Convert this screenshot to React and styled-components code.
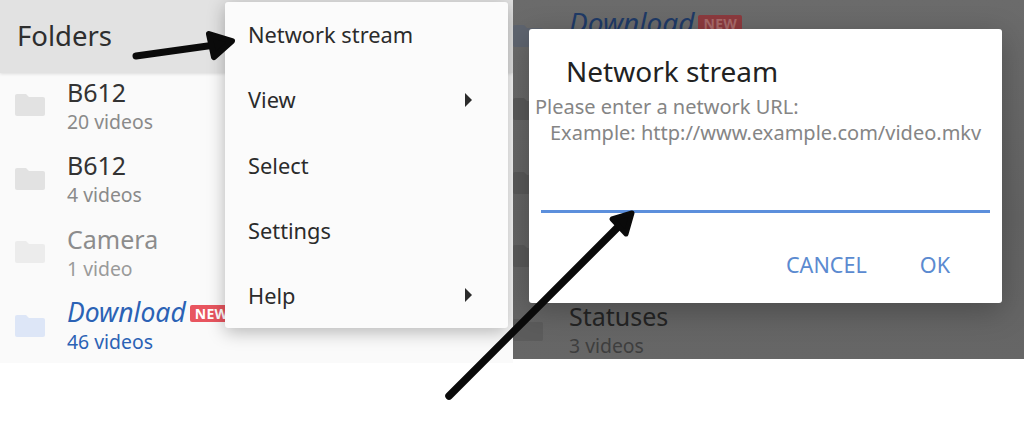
import React from 'react';
import styled, { createGlobalStyle } from 'styled-components';

const GlobalStyle = createGlobalStyle`
  html, body {
    margin: 0;
    background: #fff;
  }
  body {
    font-family: "Noto Sans", "Open Sans", sans-serif;
  }
`;

const Stage = styled.div`
  position: relative;
  width: 1024px;
  height: 434px;
  display: flex;
  align-items: flex-start;
  overflow: hidden;
  background: #fff;
`;

const Panel = styled.section`
  position: relative;
  width: ${({ dark }) => (dark ? '511px' : '513px')};
  height: ${({ dark }) => (dark ? '359px' : '363px')};
  overflow: hidden;
  background: ${({ dark }) => (dark ? 'linear-gradient(#6b6b6b, #636363 60%, #666)' : '#fafafa')};
`;

const Header = styled.header`
  height: 73px;
  box-sizing: border-box;
  padding: 0 0 3px 17px;
  display: flex;
  align-items: center;
  background: #e2e2e2;
  box-shadow: 0 1px 3px rgba(0, 0, 0, 0.12);
  color: #2e2e2e;
  font-size: 27.5px;
`;

const Row = styled.div`
  height: 73.5px;
  box-sizing: border-box;
  display: flex;
  align-items: center;
  padding: ${({ dark }) => (dark ? '0 0 2px 0' : '0 0 9px 15px')};
  gap: ${({ dark }) => (dark ? '26px' : '22px')};
`;

const FolderIcon = styled.svg`
  width: 30px;
  height: 22px;
  flex: none;
  fill: ${({ color }) => color};
`;

const RowText = styled.div`
  display: flex;
  flex-direction: column;
  gap: 3px;
  white-space: nowrap;
`;

const TitleLine = styled.div`
  display: flex;
  align-items: center;
  gap: 4px;
  height: 30px;
`;

const RowTitle = styled.span`
  font-size: ${({ italic, dark }) => (italic ? (dark ? '28px' : '26.5px') : '25px')};
  line-height: 30px;
  color: ${({ color }) => color};
  font-style: ${({ italic }) => (italic ? 'italic' : 'normal')};
`;

const RowCount = styled.span`
  min-height: 24px;
  font-size: 19.4px;
  line-height: 24px;
  color: ${({ color }) => color};
`;

const NewBadge = styled.span`
  display: inline-block;
  padding: 0 5px;
  height: 17px;
  line-height: 17px;
  border-radius: 2px;
  margin-top: 2px;
  font-size: 14px;
  font-weight: 700;
  letter-spacing: 0.3px;
  color: ${({ dark }) => (dark ? '#a86a6a' : '#fff')};
  background: ${({ dark }) => (dark ? '#8c3a3e' : '#e8555f')};
`;

const Menu = styled.nav`
  position: absolute;
  left: 225px;
  top: 2px;
  width: 283px;
  height: 326px;
  display: flex;
  flex-direction: column;
  background: #fbfbfb;
  border-radius: 3px;
  box-shadow: 0 4px 18px rgba(0, 0, 0, 0.28);
`;

const MenuItem = styled.div`
  flex: 1;
  display: flex;
  align-items: center;
  justify-content: space-between;
  padding: 0 36px 0 23px;
  font-size: 21.8px;
  color: #2b2b2b;
`;

const Caret = styled.span`
  width: 0;
  height: 0;
  border-top: 7px solid transparent;
  border-bottom: 7px solid transparent;
  border-left: 7px solid #2b2b2b;
`;

const Dialog = styled.div`
  position: absolute;
  left: 16px;
  top: 29px;
  width: 473px;
  height: 274px;
  box-sizing: border-box;
  padding: 0 12px 0 6px;
  display: flex;
  flex-direction: column;
  background: #fff;
  border-radius: 3px;
  box-shadow: 0 8px 30px rgba(0, 0, 0, 0.25);
`;

const DialogTitle = styled.h2`
  margin: 26px 0 0 31px;
  font-size: 28px;
  line-height: 32px;
  font-weight: 400;
  color: #222;
`;

const DialogBody = styled.div`
  margin-top: 7px;
  font-size: 20px;
  line-height: 26px;
  color: #858585;
  white-space: nowrap;
`;

const ExampleLine = styled.div`
  padding-left: 15px;
`;

const UrlInput = styled.div`
  margin: 64px 0 0 6px;
  height: 3px;
  background: #5c8fdc;
`;

const DialogActions = styled.div`
  margin-top: 39px;
  display: flex;
  justify-content: flex-end;
  gap: 53px;
  padding-right: 40px;
`;

const ActionButton = styled.span`
  font-size: 21.6px;
  line-height: 26px;
  color: #5b8ad0;
`;

const ArrowLayer = styled.svg`
  position: absolute;
  left: 0;
  top: 0;
  pointer-events: none;
`;

const Folder = ({ color }) => (
  <FolderIcon viewBox="0 0 30 22" color={color}>
    <path d="M2 0h9l3 3h14a2 2 0 0 1 2 2v15a2 2 0 0 1-2 2H2a2 2 0 0 1-2-2V2a2 2 0 0 1 2-2z" />
  </FolderIcon>
);

const folders = [
  { name: 'B612', count: '20 videos', title: '#333', sub: '#8a8a8a', icon: '#e2e2e2' },
  { name: 'B612', count: '4 videos', title: '#333', sub: '#8a8a8a', icon: '#e2e2e2' },
  { name: 'Camera', count: '1 video', title: '#8c8c8c', sub: '#9a9a9a', icon: '#ececec' },
  { name: 'Download', count: '46 videos', title: '#2b62b5', sub: '#2b62b5', icon: '#dde6f7', italic: true, isNew: true },
];

const dimmedFolders = [
  { name: 'Download', title: '#1f3a66', icon: '#5e646f', italic: true, isNew: true },
  { icon: '#595959' },
  { icon: '#595959' },
  { icon: '#595959' },
  { name: 'Statuses', count: '3 videos', title: '#242424', sub: '#3e3e3e', icon: '#5c5c5c' },
];

const menuItems = [
  { label: 'Network stream' },
  { label: 'View', more: true },
  { label: 'Select' },
  { label: 'Settings' },
  { label: 'Help', more: true },
];

const FolderRow = ({ folder, dark }) => (
  <Row dark={dark}>
    <Folder color={folder.icon} />
    {folder.name && (
      <RowText>
        <TitleLine>
          <RowTitle color={folder.title} italic={folder.italic} dark={dark}>{folder.name}</RowTitle>
          {folder.isNew && <NewBadge dark={dark}>NEW</NewBadge>}
        </TitleLine>
        <RowCount color={folder.sub}>{folder.count}</RowCount>
      </RowText>
    )}
  </Row>
);

const App = () => (
  <Stage>
    <GlobalStyle />
    <Panel>
      <Header>Folders</Header>
      {folders.map((folder) => (
        <FolderRow key={folder.name + folder.count} folder={folder} />
      ))}
      <Menu>
        {menuItems.map((item) => (
          <MenuItem key={item.label}>
            {item.label}
            {item.more && <Caret />}
          </MenuItem>
        ))}
      </Menu>
    </Panel>
    <Panel dark>
      {dimmedFolders.map((folder, i) => (
        <FolderRow key={i} folder={folder} dark />
      ))}
      <Dialog>
        <DialogTitle>Network stream</DialogTitle>
        <DialogBody>
          Please enter a network URL:
          <ExampleLine>Example: http://www.example.com/video.mkv</ExampleLine>
        </DialogBody>
        <UrlInput />
        <DialogActions>
          <ActionButton>CANCEL</ActionButton>
          <ActionButton>OK</ActionButton>
        </DialogActions>
      </Dialog>
    </Panel>
    <ArrowLayer width="1024" height="434" viewBox="0 0 1024 434">
      <g fill="none" stroke="#0a0a0a" strokeLinecap="round" strokeLinejoin="round">
        <path d="M136 56L222 44" strokeWidth="7" />
        <path d="M209 34L232 41L214 57Z" fill="#0a0a0a" strokeWidth="6" />
        <path d="M449 396L626 219" strokeWidth="7.5" />
        <path d="M612 219L632 213L626 234Z" fill="#0a0a0a" strokeWidth="5" />
      </g>
    </ArrowLayer>
  </Stage>
);

export default App;
